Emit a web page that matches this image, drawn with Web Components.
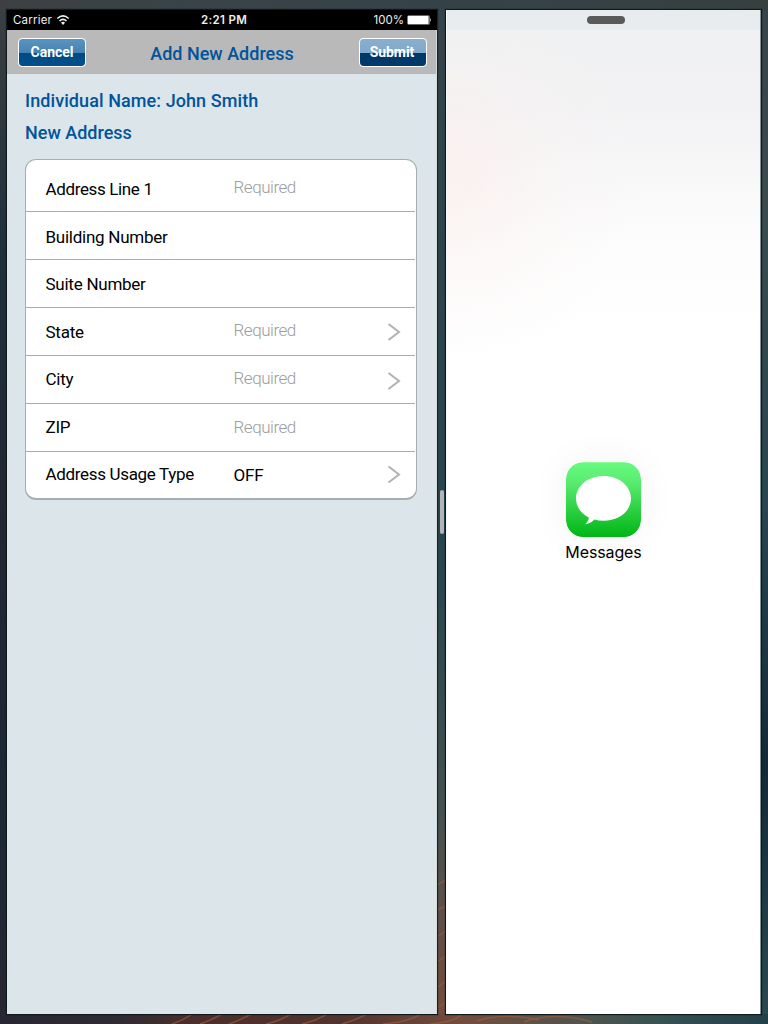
<!DOCTYPE html>
<html lang="en">
<head>
<meta charset="utf-8">
<title>Add New Address</title>
<style>
html, body { margin: 0; height: 100%; }
body { font-family: Roboto, sans-serif; overflow: hidden; }
</style>
</head>
<body>
<split-desktop>
  <address-app slot="primary">
    <status-bar></status-bar>
    <nav-bar>
      <glossy-button slot="left">Cancel</glossy-button>
      <span>Add New Address</span>
      <glossy-button slot="right" tone="dark">Submit</glossy-button>
    </nav-bar>
    <section-title style="letter-spacing:.08px">Individual Name: John Smith</section-title>
    <section-title compact>New Address</section-title>
    <form-card>
      <form-row label="Address Line 1" value="Required" style="--h:51px;--ly:3px;--vy:1px;--ls:-.36px"></form-row>
      <form-row label="Building Number" style="--ly:1px"></form-row>
      <form-row label="Suite Number"></form-row>
      <form-row label="State" value="Required" more style="--vy:-2px"></form-row>
      <form-row label="City" value="Required" more style="--ly:-1px;--vy:-2px;--cy:1px"></form-row>
      <form-row label="ZIP" value="Required" style="--ly:-1px;--vy:-1px"></form-row>
      <form-row label="Address Usage Type" value="OFF" filled more style="--h:47px;--ly:-2px;--vy:-1px;--cy:-1.5px;--ls:-.33px"></form-row>
    </form-card>
  </address-app>
  <side-app slot="secondary"><app-icon>Messages</app-icon></side-app>
</split-desktop>

<script>
const define = (name, html, setup) => {
  const template = document.createElement('template');
  template.innerHTML = html;
  customElements.define(name, class extends HTMLElement {
    constructor() {
      super();
      this.attachShadow({ mode: 'open' }).append(template.content.cloneNode(true));
    }
    connectedCallback() { if (setup) setup(this, this.shadowRoot); }
  });
};

define('split-desktop', `
<style>
:host { display: block; position: relative; width: 768px; height: 1024px; overflow: hidden; background: #2d3c41; }
.wall { position: absolute; inset: 0; display: block; }
.panes { position: relative; display: grid; grid-template-columns: 430px 9px 315px; height: 1004px; padding: 10px 7px; }
.divider { display: flex; align-items: center; justify-content: center; box-shadow: inset 1px 0 #192427, inset -1px 0 #192427; }
.divider i { width: 4px; height: 44px; border-radius: 2px; background: #b3b4b7; }
::slotted(*) { box-shadow: 0 0 1px 1px #10191c; }
</style>
<svg class="wall" width="768" height="1024" viewBox="0 0 768 1024" aria-hidden="true">
  <defs>
    <linearGradient id="l" x2="0" y2="1"><stop stop-color="#3b3f42"/><stop offset=".1" stop-color="#303a40"/><stop offset=".25" stop-color="#1d303c"/><stop offset=".5" stop-color="#222632"/><stop offset=".8" stop-color="#1b2836"/><stop offset="1" stop-color="#292632"/></linearGradient>
    <linearGradient id="m" x2="0" y2="1"><stop stop-color="#36444a"/><stop offset=".3" stop-color="#2c444d"/><stop offset=".55" stop-color="#264650"/><stop offset=".8" stop-color="#46514f"/><stop offset=".88" stop-color="#5b5049"/><stop offset="1" stop-color="#764c3b"/></linearGradient>
    <linearGradient id="r" x2="0" y2="1"><stop stop-color="#374348"/><stop offset=".2" stop-color="#3a4b4e"/><stop offset=".5" stop-color="#29444e"/><stop offset=".75" stop-color="#122a36"/><stop offset="1" stop-color="#2b4950"/></linearGradient>
    <linearGradient id="t"><stop stop-color="#3c4042"/><stop offset=".3" stop-color="#394449"/><stop offset=".6" stop-color="#344248"/><stop offset="1" stop-color="#37403f"/></linearGradient>
    <linearGradient id="b"><stop stop-color="#282633"/><stop offset=".16" stop-color="#302b32"/><stop offset=".25" stop-color="#4b2e2b"/><stop offset=".45" stop-color="#51342d"/><stop offset=".6" stop-color="#734d3d"/><stop offset=".75" stop-color="#53534d"/><stop offset=".85" stop-color="#385352"/><stop offset="1" stop-color="#233f49"/></linearGradient>
  </defs>
  <path fill="url(#l)" d="M0 0h12v1024H0z"/><path fill="url(#m)" d="M430 0h25v1024h-25z"/><path fill="url(#r)" d="M755 0h13v1024h-13z"/>
  <path fill="url(#t)" d="M0 0h768v10H0z"/><path fill="url(#b)" d="M0 1014h768v10H0z"/>
  <g fill="none" stroke="#995e42" stroke-width="1.5" opacity=".65"><path d="M172 1024q12-4 20-10M200 1024q12-4 22-10M229 1024q12-4 22-10M266 1024q14-3 25-10M302 1024q14-3 25-10M342 1024q14-4 25-10M383 1024q25-2 38-10M430 1024q25-2 32-10M477 1021q27-9 62-1M524 1022q30-11 68 0"/><path d="M437 885l9-5M437 910l9-4M437 937l9-6M437 962l9-6M437 988l9-7M437 1008l9-6"/></g>
</svg>
<div class="panes"><slot name="primary"></slot><div class="divider"><i></i></div><slot name="secondary"></slot></div>`);

define('address-app', `
<style>
:host { display: block; background: #dce5ea; color: #01549b; box-sizing: border-box; border-right: 1px solid #d3dcda; }
</style><slot></slot>`);

define('status-bar', `
<style>
:host { display: grid; grid-template-columns: 1fr auto 1fr; align-items: center; height: 20px; margin-right: -1px; box-sizing: border-box; padding: 0 5px 0 6px; background: #000; color: #eee; font: 11.5px/20px Inter, sans-serif; }
.left, .right { display: flex; align-items: center; }
.left { gap: 5px; letter-spacing: .2px; }
.right { justify-content: flex-end; gap: 3px; }
.time { font-weight: 600; letter-spacing: .35px; padding-left: 3px; }
svg { overflow: visible; }
</style>
<div class="left"><span>Carrier</span><svg width="12" height="10" viewBox="0 0 12 10" fill="none" stroke="#eee" stroke-width="1.6"><path d="M.3 3.500Q6-1.600 11.700 3.500M2.500 6Q6 2.800 9.500 6"/><path fill="#eee" stroke="none" d="M4 7.700Q6 5.900 8 7.700L6 9.900z"/></svg></div>
<div class="time">2:21 PM</div>
<div class="right"><span>100%</span><svg width="25" height="10" viewBox="0 0 25 10"><rect x=".3" y=".2" width="22.5" height="9.6" rx="1.5" fill="#858585"/><rect x=".8" y="1" width="20.5" height="8" rx=".8" fill="#fff"/><path d="M23.2 3q1.6 2 0 4z" fill="#fff"/></svg></div>`);

define('nav-bar', `
<style>
:host { display: flex; align-items: center; justify-content: space-between; height: 44px; box-sizing: border-box; padding: 0 9px 0 11px; background: #b9b9b9; font-size: 18px; font-weight: 500; line-height: 24px; }
.title { padding: 3px 1px 0 0; }
</style><slot name="left"></slot><div class="title"><slot></slot></div><slot name="right"></slot>`);

define('glossy-button', `
<style>
:host { display: block; }
button { display: block; width: 68px; height: 29px; box-sizing: border-box; border: 1px solid #fff; border-radius: 4px; padding: 0 0 1px; color: #fff; font: 700 14px/24px Roboto, sans-serif; letter-spacing: -.05px; text-align: center; background: linear-gradient(#5b94c0, #4683b2 50%, #004a84 51%, #014f8a) padding-box; }
:host([tone=dark]) button { padding-right: 2px; background: linear-gradient(#89afcf, #80a9cb 50%, #003866 51%, #003a6b) padding-box; }
</style><button type="button"><slot></slot></button>`);

define('section-title', `
<style>
:host { display: block; margin-left: 18px; font-size: 18px; font-weight: 500; line-height: 22px; padding: 16px 0 0; }
:host([compact]) { padding-top: 10px; }
</style><slot></slot>`);

define('form-card', `
<style>
:host { display: block; width: 392px; height: 341px; box-sizing: border-box; margin: 15px 0 0 18px; border: 1px solid #a8adb0; border-bottom-width: 2px; border-radius: 11px; background: #fff; overflow: hidden; }
</style><slot></slot>`);

define('form-row', `
<style>
:host { display: grid; grid-template-columns: 188px 1fr 14px; align-items: center; height: var(--h, 47px); padding: 0 14px 0 19.500px; margin-right: 1px; border-bottom: 1px solid #aaacae; color: #000; font-size: 17px; line-height: 20px; letter-spacing: var(--ls, -.25px); }
:host(:last-child) { border: 0; }
span { transform: translateY(var(--ly, 0)); white-space: nowrap; }
.value { transform: translateY(var(--vy, 0)); color: #9a9ea1; font-weight: 300; letter-spacing: -.46px; }
:host([filled]) .value { color: #000; font-weight: 400; letter-spacing: -.2px; }
svg { display: none; transform: translateY(var(--cy, 0)); }
:host([more]) svg { display: block; }
</style><span class="label"></span><span class="value"></span><svg width="14" height="20" viewBox="0 0 14 20" fill="none" stroke="#b1b1b1" stroke-width="2"><path d="M1.5 2l10.5 8L1.5 18"/></svg>`,
(host, root) => {
  root.querySelector('.label').textContent = host.getAttribute('label');
  root.querySelector('.value').textContent = host.getAttribute('value') || '';
});

define('side-app', `
<style>
:host { display: grid; grid-template-rows: 20px 1fr; background: radial-gradient(ellipse 190px 190px at 0 165px, rgba(252,238,237,.7), rgba(250,241,239,.35) 50%, rgba(255,255,255,0)), linear-gradient(177deg, #eff0f2 690px, #f0f0f1 0, #fff 0) 0 0/0 0 no-repeat, linear-gradient(#f0f1f3 20px, #f2f2f4 100px, #f8f8f9 170px, #fdfdfd 240px, #fff 340px); border-left: 1px solid #f7f9f9; border-right: 1px solid #849095; box-sizing: border-box; }
header { display: flex; justify-content: center; align-items: center; background: #e8ecef; }
header i { width: 38px; height: 8px; border-radius: 4px; background: #5a5a5a; margin-left: 5px; }
main { display: flex; justify-content: center; align-items: flex-start; padding-top: 432px; }
</style><header><i></i></header><main><slot></slot></main>`);

define('app-icon', `
<style>
:host { display: flex; flex-direction: column; align-items: center; color: #000; font: 16px/24px Inter, sans-serif; letter-spacing: -.12px; }
svg { display: block; border-radius: 17px; box-shadow: 0 0 38px rgba(0,0,0,.055); }
div { margin-top: 3px; }
</style>
<svg width="75" height="75" viewBox="0 -.3 75 75"><defs><linearGradient id="g" x2="0" y2="1"><stop stop-color="#68fa7f"/><stop offset=".25" stop-color="#5bed72"/><stop offset="1" stop-color="#00b514"/></linearGradient></defs><rect width="75" height="75" rx="17" fill="url(#g)"/><path fill="#fff" d="M37.5 13.8C22.100 13.800 10 23.800 10 36.300c0 8 4.800 14.800 12.700 19 .2 2.200-1.100 4.400-3.700 6.700 3.900-.2 7.200-2 9.300-4.700 2.900.8 6 1.200 9.200 1.200C52.900 58.500 65 48.800 65 36.300S52.900 13.800 37.500 13.800z"/></svg>
<div><slot></slot></div>`);
</script>
</body>
</html>
